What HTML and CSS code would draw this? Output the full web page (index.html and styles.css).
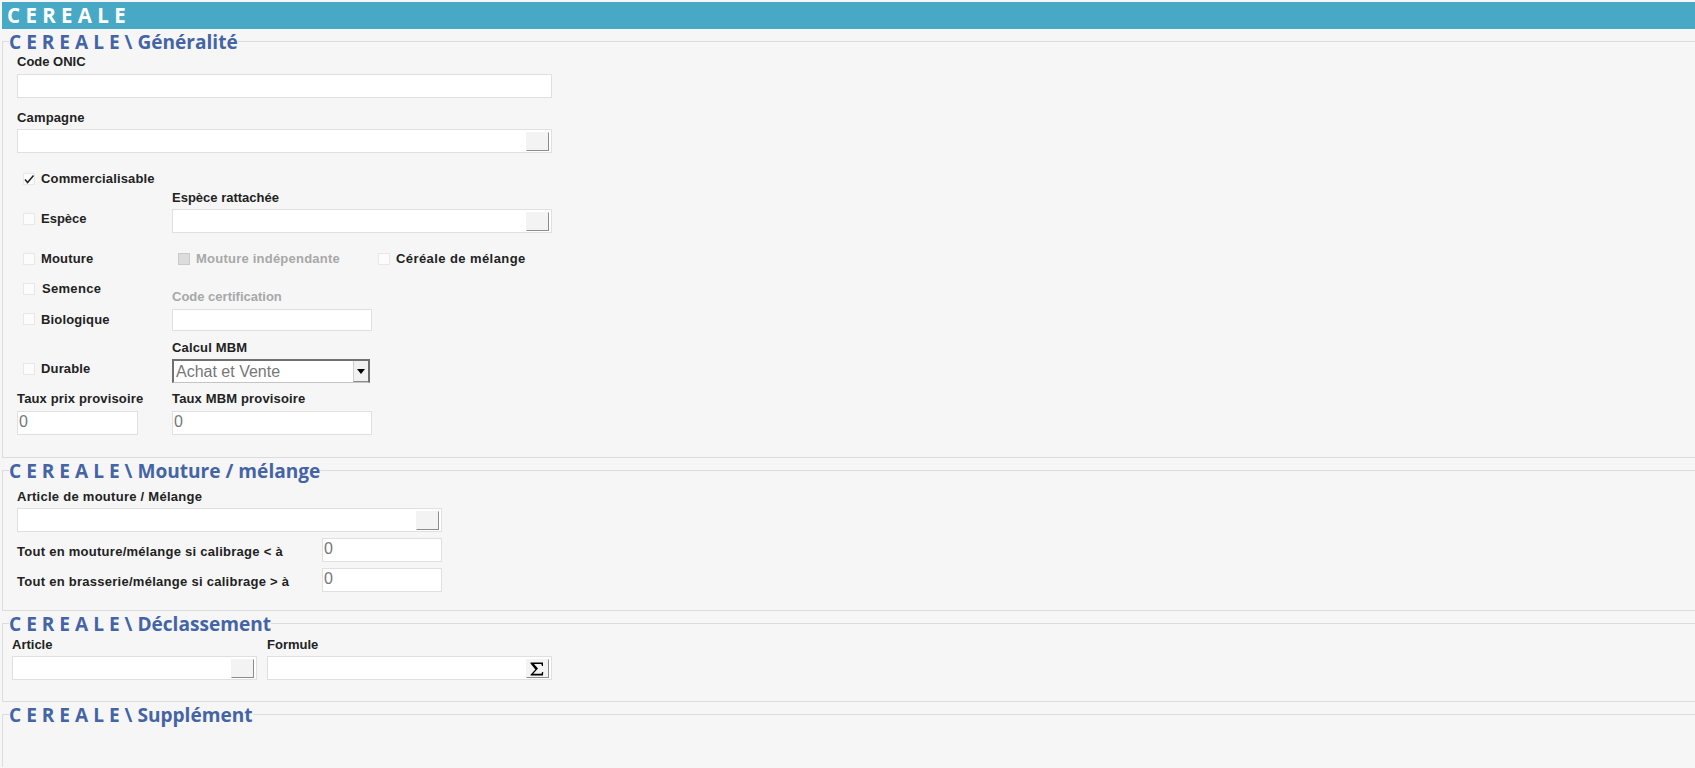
FILE: index.html
```html
<!DOCTYPE html>
<html lang="fr">
<head>
<meta charset="utf-8">
<title>CEREALE</title>
<link rel="stylesheet" href="styles.css">
</head>
<body>
<header class="title-bar">C E R E A L E</header>

<fieldset class="section section-general">
  <legend>C E R E A L E \ Généralité</legend>
  <div class="field">
    <label class="lbl lbl-tight lbl-high">Code ONIC</label>
    <input class="txt w-full" type="text">
  </div>
  <div class="field mt-11">
    <label class="lbl">Campagne</label>
    <div class="lookup w-full"><button class="lookup-btn" type="button"></button></div>
  </div>

  <div class="check-row mt-16">
    <span class="check"><span class="cb"><svg class="tick" viewBox="0 0 12 12"><path d="M2 6.5 4.6 9.5 10.5 2.5" fill="none" stroke="#222" stroke-width="1.5"/></svg></span><span class="lbl-inline">Commercialisable</span></span>
  </div>

  <div class="row row-end">
    <span class="check col-left mb-4"><span class="cb"></span><span class="lbl-inline lbl-tight">Espèce</span></span>
    <div class="field">
      <label class="lbl lbl-tight">Espèce rattachée</label>
      <div class="lookup w-right"><button class="lookup-btn" type="button"></button></div>
    </div>
  </div>

  <div class="row mt-16">
    <span class="check col-left"><span class="cb"></span><span class="lbl-inline">Mouture</span></span>
    <span class="check col-mid"><span class="cb cb-disabled"></span><span class="lbl-inline lbl-disabled spaced">Mouture indépendante</span></span>
    <span class="check"><span class="cb"></span><span class="lbl-inline lbl-wide">Céréale de mélange</span></span>
  </div>

  <div class="row mt-10">
    <div class="col-left stack">
      <span class="check"><span class="cb"></span><span class="lbl-inline nudge">Semence</span></span>
      <span class="check"><span class="cb"></span><span class="lbl-inline lbl-low">Biologique</span></span>
    </div>
    <div class="field pt-10">
      <label class="lbl lbl-tight lbl-high lbl-disabled">Code certification</label>
      <input class="txt w-mid short" type="text">
    </div>
  </div>

  <div class="row row-end mt-8">
    <span class="check col-left mb-4"><span class="cb"></span><span class="lbl-inline">Durable</span></span>
    <div class="field">
      <label class="lbl">Calcul MBM</label>
      <div class="select"><span class="select-value">Achat et Vente</span><span class="select-arrow"><svg viewBox="0 0 8 5" class="arrow"><path d="M0 0H8L4 5Z" fill="#000"/></svg></span></div>
    </div>
  </div>

  <div class="row mt-8">
    <div class="field col-left">
      <label class="lbl lbl-high">Taux prix provisoire</label>
      <input class="txt w-small" type="text" value="0">
    </div>
    <div class="field">
      <label class="lbl lbl-high">Taux MBM provisoire</label>
      <input class="txt w-mid" type="text" value="0">
    </div>
  </div>
</fieldset>

<fieldset class="section section-mouture">
  <legend>C E R E A L E \ Mouture / mélange</legend>
  <div class="field mt-5">
    <label class="lbl lbl-calib-text">Article de mouture / Mélange</label>
    <div class="lookup w-mouture"><button class="lookup-btn" type="button"></button></div>
  </div>
  <div class="row mt-6">
    <label class="lbl-calib">Tout en mouture/mélange si calibrage &lt; à</label>
    <input class="txt w-calib" type="text" value="0">
  </div>
  <div class="row mt-6">
    <label class="lbl-calib">Tout en brasserie/mélange si calibrage &gt; à</label>
    <input class="txt w-calib" type="text" value="0">
  </div>
</fieldset>

<fieldset class="section section-declass">
  <legend>C E R E A L E \ Déclassement</legend>
  <div class="row declass-row">
    <div class="field">
      <label class="lbl lbl-tight">Article</label>
      <div class="lookup w-article"><button class="lookup-btn" type="button"></button></div>
    </div>
    <div class="field">
      <label class="lbl lbl-tight">Formule</label>
      <div class="lookup w-formule"><button class="lookup-btn" type="button"><svg class="sigma" viewBox="0 0 14 14"><path d="M0.5 0.5H13V4H12L11.3 2H4L8 6.6 3.2 11.7H11.4L12.2 10H13.2L13 13.6H0.5V12.8L5.4 7.6 0.5 1.4Z" fill="#000"/></svg></button></div>
    </div>
  </div>
</fieldset>

<fieldset class="section section-supp">
  <legend>C E R E A L E \ Supplément</legend>
</fieldset>
</body>
</html>
```

FILE: styles.css
```css
* { box-sizing: border-box; }

html, body { height: 100%; }

body {
  margin: 0;
  padding: 2px 0 0 2px;
  background: #f6f6f6;
  overflow: hidden;
  font-family: "Liberation Sans", Arial, sans-serif;
  font-size: 13px;
  letter-spacing: 0.15px;
  color: #222;
}

.title-bar {
  height: 27px;
  line-height: 26px;
  padding-left: 5px;
  background: #47a9c6;
  color: #fff;
  font-family: "Open Sans", sans-serif;
  font-weight: 700;
  font-size: 20.5px;
  letter-spacing: 0;
}

.section {
  margin: 0;
  min-width: 0;
  padding: 0 0 0 14px;
  border: 0 solid #dcdcdc;
  border-width: 1px 0 1px 1px;
}

.section legend {
  height: 25px;
  margin-left: -8px;
  padding: 0;
  line-height: 26px;
  color: #4464a6;
  font-family: "Open Sans", sans-serif;
  font-weight: 700;
  font-size: 19.1px;
  letter-spacing: 0;
}

.section-general { padding-bottom: 22px; }
.section-mouture { padding-bottom: 18px; }
.section-declass { padding: 0 0 21px 9px; }
.section-declass legend { margin-left: -3px; }
.section-supp { height: 65px; border-bottom: 0; }

.field { display: block; }

.lbl {
  display: block;
  height: 16px;
  margin-bottom: 4px;
  line-height: 17px;
  font-weight: 700;
  white-space: nowrap;
}

.lbl-high { line-height: 15px; }

.lbl-inline {
  margin: 0 0 2px 6px;
  font-weight: 700;
  white-space: nowrap;
}

.lbl-low { margin-bottom: 0; }
.lbl-tight { letter-spacing: 0; }
.lbl-wide { letter-spacing: 0.42px; }
.lbl-disabled { color: #a8a8a8; }
.spaced { letter-spacing: 0.23px; }
.nudge { margin-left: 7px; letter-spacing: 0.3px; }
.lbl-calib-text { letter-spacing: 0.27px; }

.lbl-calib {
  width: 305px;
  margin-top: 4px;
  line-height: 20px;
  font-weight: 700;
  white-space: nowrap;
  letter-spacing: 0.27px;
}

.txt {
  display: block;
  height: 24px;
  margin: 0;
  padding: 0 1px 2px;
  background: #fff;
  border: 1px solid #e0e0e0;
  border-radius: 0;
  outline: 0;
  color: #777;
  font-family: "Liberation Sans", Arial, sans-serif;
  font-size: 16px;
}

.short { height: 22px; }

.w-full { width: 535px; }
.w-right { width: 380px; }
.w-mid { width: 200px; }
.w-small { width: 121px; }
.w-mouture { width: 425px; }
.w-calib { width: 120px; }
.w-article { width: 245px; }
.w-formule { width: 285px; }

.lookup {
  display: flex;
  justify-content: flex-end;
  align-items: flex-start;
  height: 24px;
  padding: 2px 2px 0 0;
  background: #fff;
  border: 1px solid #e0e0e0;
}

.lookup-btn {
  display: flex;
  align-items: center;
  justify-content: center;
  width: 23px;
  height: 19px;
  padding: 0;
  background: #f3f3f3;
  border: 1px solid #f3f3f3;
  border-right-color: #8c8c8c;
  border-bottom-color: #8c8c8c;
  border-radius: 0;
}

.sigma { display: block; width: 14px; height: 14px; margin-right: 2px; }

.row { display: flex; }
.row-end { align-items: flex-end; }
.declass-row { gap: 10px; }

.col-left { width: 155px; flex: none; }
.col-mid { width: 200px; flex: none; }

.stack {
  display: flex;
  flex-direction: column;
  gap: 10px;
}

.check-row { display: flex; }

.check {
  display: flex;
  align-items: center;
  height: 20px;
  padding-left: 6px;
}

.cb {
  display: block;
  flex: none;
  width: 12px;
  height: 12px;
  background: #fcfcfc;
  border: 1px solid #e8e8e8;
}

.cb-disabled {
  background: #dcdcdc;
  border-color: #cacaca;
}

.tick { display: block; width: 12px; height: 12px; margin: -1px; }

.select {
  display: flex;
  justify-content: space-between;
  width: 198px;
  height: 24px;
  background: #fff;
  border: 2px solid #707070;
  border-bottom: 1px solid #c4c4c4;
}

.select-value {
  padding-left: 2px;
  color: #777;
  font-size: 16px;
  line-height: 22px;
  letter-spacing: 0;
}

.select-arrow {
  display: flex;
  align-items: center;
  justify-content: center;
  width: 15px;
  background: #f1f1f1;
  border-left: 1px solid #cfcfcf;
  border-bottom: 1px solid #8c8c8c;
}

.arrow { display: block; width: 8px; height: 5px; }

.mt-5 { margin-top: 5px; }
.mt-6 { margin-top: 6px; }
.mt-8 { margin-top: 8px; }
.mt-10 { margin-top: 10px; }
.mt-11 { margin-top: 11px; }
.mt-16 { margin-top: 16px; }
.mb-4 { margin-bottom: 4px; }
.pt-10 { padding-top: 10px; }
```
